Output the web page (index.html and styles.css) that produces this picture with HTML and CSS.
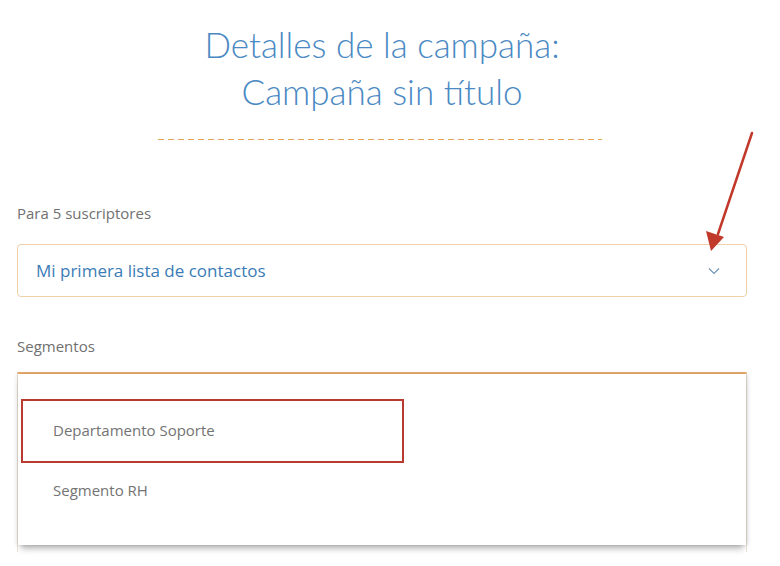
FILE: index.html
```html
<!DOCTYPE html>
<html lang="es">
<head>
<meta charset="utf-8">
<link rel="stylesheet" href="styles.css">
</head>
<body>
<div class="page">
  <h1 class="title">Detalles de la campaña:<br>Campaña sin título</h1>
  <div class="divider"></div>
  <div class="label label-first">Para 5 suscriptores</div>
  <div class="select">
    <span class="select-text">Mi primera lista de contactos</span>
    <svg class="chevron" width="12" height="8" viewBox="0 0 12 8"><path d="M1 1.5 L6 6.5 L11 1.5" fill="none" stroke="#6f95b5" stroke-width="1.2"/></svg>
  </div>
  <div class="label label-seg">Segmentos</div>
  <div class="seg-field">
    <div class="dropdown">
      <div class="option">Departamento Soporte</div>
      <div class="option">Segmento RH</div>
    </div>
  </div>
  <div class="highlight"></div>
  <svg class="arrow" width="780" height="566" viewBox="0 0 780 566">
    <line x1="752" y1="133" x2="718" y2="234" stroke="#c0392b" stroke-width="2.5" stroke-linecap="round"/>
    <polygon points="711,251 706,231 724,237" fill="#c0392b"/>
  </svg>
</div>
</body>
</html>
```
FILE: styles.css
```css
html, body {
  margin: 0;
  padding: 0;
  background: #fff;
}
.page {
  position: relative;
  width: 730px;
  height: 566px;
  padding: 0 33px 0 17px;
  font-family: "Open Sans", "Liberation Sans", sans-serif;
  overflow: hidden;
}
.title {
  margin: 0;
  padding-top: 21px;
  text-align: center;
  font-family: Lato, "Open Sans", sans-serif;
  font-weight: 300;
  font-size: 35px;
  line-height: 47px;
  color: #4a89c3;
}
.divider {
  width: 444px;
  height: 1px;
  margin: 24px auto 0 141px;
  background: repeating-linear-gradient(to right, #e4a458 0 6px, transparent 6px 10px);
}
.label {
  font-size: 15px;
  line-height: 20px;
  color: #707070;
}
.label-first {
  margin-top: 63px;
}
.select {
  margin-top: 21px;
  height: 51px;
  border: 1px solid #efd0a8;
  border-radius: 4px;
  display: flex;
  align-items: center;
  justify-content: space-between;
  padding: 0 26px 0 18px;
}
.select-text {
  font-size: 17px;
  color: #3b7cb6;
}
.chevron {
  display: block;
}
.label-seg {
  margin-top: 39px;
}
.seg-field {
  margin-top: 16px;
  border-top: 2px solid #ecae6e;
  border-left: 1px solid #ece3d6;
  border-right: 1px solid #ece3d6;
  height: 178px;
}
.dropdown {
  height: 171px;
  background: #fff;
  box-shadow: 0 7px 6px -3px rgba(0,0,0,0.25), 2px 0 4px rgba(0,0,0,0.12), -2px 0 4px rgba(0,0,0,0.08);
  padding-top: 26px;
  box-sizing: border-box;
}
.option {
  height: 60px;
  display: flex;
  align-items: center;
  padding-left: 35px;
  font-size: 15px;
  color: #737373;
}
.highlight {
  position: absolute;
  left: 21px;
  top: 399px;
  width: 379px;
  height: 60px;
  border: 2px solid #b83a30;
}
.arrow {
  position: absolute;
  left: 0;
  top: 0;
  pointer-events: none;
}
```
